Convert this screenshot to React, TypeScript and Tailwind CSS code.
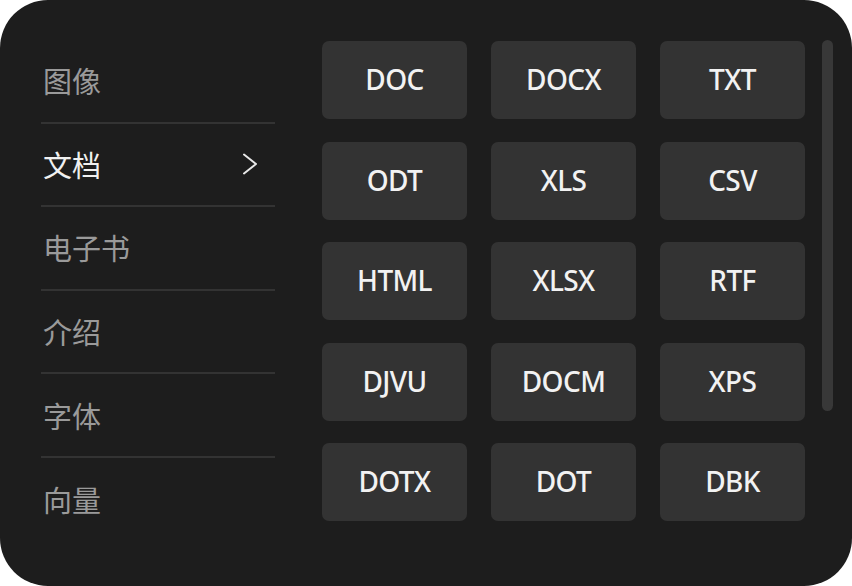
import React from "react";

const cats = ["图像", "文档", "电子书", "介绍", "字体", "向量"];
const formats = [
  "DOC", "DOCX", "TXT",
  "ODT", "XLS", "CSV",
  "HTML", "XLSX", "RTF",
  "DJVU", "DOCM", "XPS",
  "DOTX", "DOT", "DBK",
];

export default function App() {
  return (
    <div className="w-[852px] h-[586px] bg-white">
      <div
        className="w-[852px] h-[586px] bg-[#1d1d1d] rounded-[48px] flex"
        style={{ fontFamily: '"Noto Sans", "Noto Sans CJK SC", sans-serif' }}
      >
        <div className="w-[234px] ml-[41px] pt-[40px] flex flex-col">
          {cats.map((c, i) => (
            <div
              key={c}
              className={`h-[83.6px] flex items-center justify-between pl-[2px] pr-[17px] ${
                i < cats.length - 1 ? "border-b-2 border-[#333333]" : ""
              }`}
            >
              <span
                className={`text-[29px] leading-none ${
                  i === 1 ? "text-[#f0f0f0]" : "text-[#9a9a9a]"
                }`}
                style={{ fontFamily: '"Noto Sans CJK SC", sans-serif' }}
              >
                {c}
              </span>
              {i === 1 && (
                <svg width="16" height="24" viewBox="0 0 16 24" fill="none">
                  <path d="M2 2.5 L14 12 L2 21.5" stroke="#e8e8e8" strokeWidth="2" strokeLinecap="round" strokeLinejoin="round" />
                </svg>
              )}
            </div>
          ))}
        </div>
        <div className="ml-[47px] pt-[41px] grid grid-cols-[145px_145px_145px] gap-x-[24px] gap-y-[22.6px] content-start">
          {formats.map((f) => (
            <div
              key={f}
              className="h-[78px] pb-[2px] rounded-[7px] bg-[#333333] flex items-center justify-center text-[28px] font-medium text-[#f2f2f2] tracking-[-0.6px]"
            >
              {f}
            </div>
          ))}
        </div>
        <div className="ml-[17px] mt-[40px] w-[11px] h-[371px] rounded-full bg-[#383838]" />
      </div>
    </div>
  );
}
